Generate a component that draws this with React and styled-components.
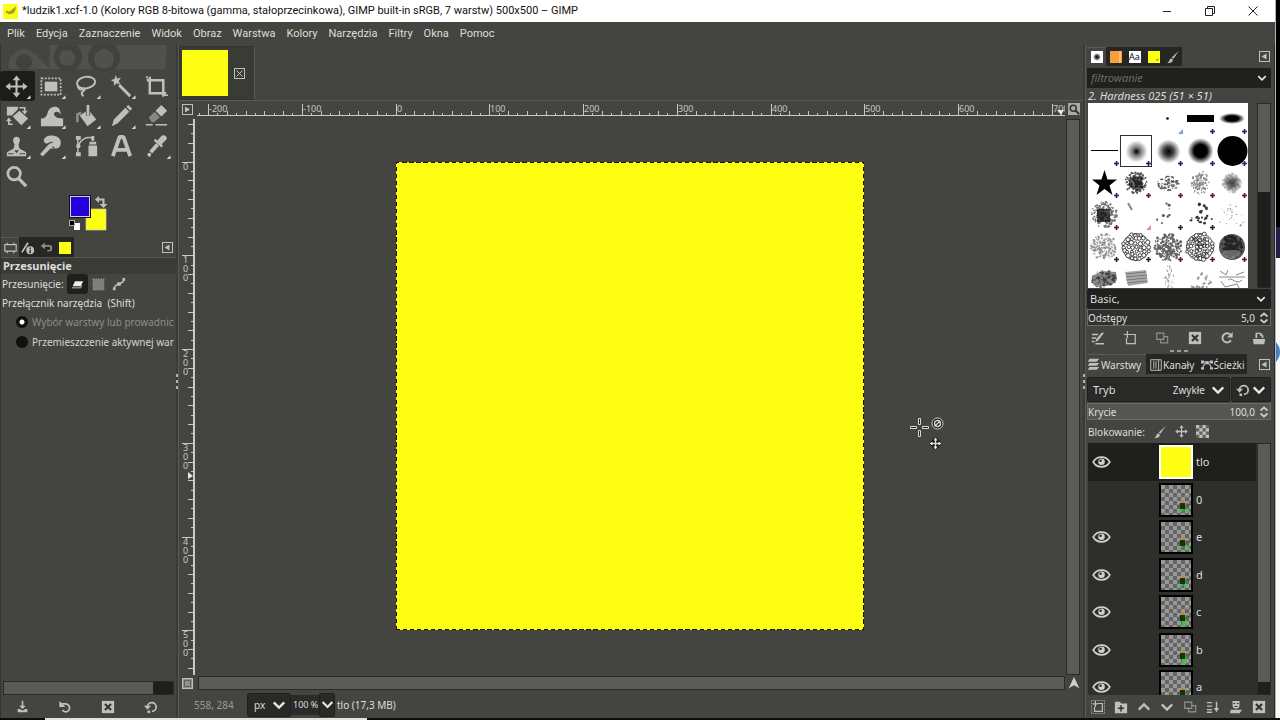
import React from 'react';
import styled, { createGlobalStyle, css } from 'styled-components';

const GlobalStyle = createGlobalStyle`
  * { box-sizing: border-box; }
  html, body { margin: 0; padding: 0; }
  body {
    background: #000;
    color: #dededa;
    font-family: "Noto Sans", "Open Sans", sans-serif;
    font-size: 10px;
    line-height: 16px;
    overflow: hidden;
  }
  button, input, select {
    font: inherit;
    color: inherit;
    background: none;
    border: 0;
    margin: 0;
    padding: 0;
    min-width: 0;
    border-radius: 0;
    outline: 0;
  }
  svg { display: block; flex: none; }
`;

const ICON = '#bfbfbb';

/* ---------- window frame ---------- */

const Desktop = styled.div`
  display: grid;
  grid-template-columns: minmax(0, 1fr) 5px;
  grid-template-rows: minmax(0, 1fr) 2px;
  height: 100vh;
`;

const Window = styled.div`
  display: flex;
  flex-direction: column;
  min-height: 0;
  background: #444441;
`;

const Behind = styled.div`
  display: flex;
  flex-direction: column;
  background: #fafafa;
  border-left: 1px solid #b4b4b0;
  overflow: hidden;
`;

const BehindBlock = styled.div`
  flex: none;
  height: ${p => p.$h}px;
  margin-left: -1px;
  background: ${p => p.$color};
`;

const BlueBadge = styled.div`
  flex: none;
  width: 28px;
  height: 28px;
  margin-top: 80px;
  margin-left: -24px;
  border-radius: 50%;
  background: #4b7fc4;
`;

const Taskbar = styled.div`
  grid-column: 1 / -1;
  display: flex;
  padding-left: 45px;
  background: #0c0c0c;
`;

const TaskbarItem = styled.div`
  width: 322px;
  background: #e4e2dc;
`;

const TitleBar = styled.header`
  display: flex;
  align-items: center;
  height: 22px;
  padding: 0 3px;
  gap: 4px;
  background: #fff;
  color: #111;
`;

const TitleText = styled.h1`
  flex: 1;
  margin: 0;
  font-family: Roboto, "Open Sans", sans-serif;
  font-size: 11px;
  font-weight: 400;
  white-space: nowrap;
`;

const WindowButton = styled.button`
  display: flex;
  justify-content: center;
  width: 39px;
  flex: none;
`;

const MenuBar = styled.nav`
  display: flex;
  align-items: center;
  height: 23px;
  padding: 0 7px;
  gap: 11px;
  font-family: Roboto, "Open Sans", sans-serif;
  font-size: 11px;
`;

const MenuButton = styled.button`
  white-space: nowrap;
`;

const Body = styled.div`
  display: flex;
  flex: 1;
  min-height: 0;
`;

const Splitter = styled.div`
  display: flex;
  flex-direction: column;
  align-items: center;
  justify-content: center;
  gap: 3px;
  width: 3px;
  background: #3a3a37;
  border-right: 1px solid #5a5a57;
`;

const SplitDot = styled.span`
  width: 2px;
  height: 3px;
  background: #b0b0ac;
`;

/* ---------- left dock ---------- */

const LeftDock = styled.aside`
  display: flex;
  flex-direction: column;
  width: 176px;
  flex: none;
  border-left: 1px solid #33332f;
`;

const ToolGrid = styled.div`
  display: grid;
  grid-template-columns: repeat(5, 35px);
  grid-auto-rows: 30px;
  margin-left: -1px;
`;

const ToolButton = styled.button`
  display: flex;
  align-items: center;
  justify-content: center;
  border-radius: 3px;
  background: ${p => (p.$active ? '#1c1c1a' : 'transparent')};
`;

const ColorArea = styled.div`
  height: 46px;
  padding: 4px 0 0 67px;
`;

const TabRow = styled.div`
  display: flex;
  align-items: stretch;
  height: ${p => p.$h || 20}px;
  padding-right: ${p => p.$right || 0}px;
`;

const DockTab = styled.button`
  display: flex;
  align-items: center;
  justify-content: center;
  gap: 1px;
  width: ${p => (p.$wide ? 'auto' : p.$w ? p.$w + 'px' : '19px')};
  white-space: nowrap;
  font-size: 10px;
  background: ${p => (p.$active ? 'transparent' : '#262624')};
  border-top: 1px solid ${p => (p.$active ? '#5a5a57' : '#262624')};
`;

const TabMenu = styled.button`
  margin-left: auto;
`;

const SectionTitle = styled.h2`
  margin: 0;
  height: 17px;
  padding-left: 2px;
  font-size: 11px;
  line-height: 16px;
  font-weight: 700;
  background: #3a3a37;
  border-top: 1px solid #555552;
`;

const OptionRow = styled.div`
  display: flex;
  align-items: center;
  height: ${p => p.$h || 20}px;
  padding-left: 1px;
  gap: ${p => p.$gap || 0}px;
  white-space: nowrap;
  overflow: hidden;
`;

const OptionLabel = styled.span`
  padding-right: 3px;
`;

const Toggle = styled.button`
  display: flex;
  align-items: center;
  justify-content: center;
  width: 21px;
  height: 20px;
  border-radius: 3px;
  background: ${p => (p.$active ? '#1f1f1d' : 'transparent')};
`;

const RadioLabel = styled.label`
  display: flex;
  align-items: center;
  height: 20px;
  padding-left: 15px;
  gap: 4px;
  width: 173px;
  overflow: hidden;
  white-space: nowrap;
  color: ${p => (p.$dim ? '#8e8e8a' : '#d4d4d0')};
`;

const Radio = styled.input`
  appearance: none;
  flex: none;
  width: 12px;
  height: 12px;
  border-radius: 50%;
  background: #0f0f0e;
  &:checked { background: radial-gradient(circle, #fff 2px, #0f0f0e 3px); }
`;

const Spacer = styled.div`
  flex: 1;
`;

const IconRow = styled.div`
  display: flex;
  align-items: center;
  justify-content: ${p => (p.$around ? 'space-around' : 'space-between')};
  flex: none;
  height: 23px;
  padding: ${p => (p.$around ? '0 4px 0 0' : '0 5px 0 4px')};
`;

const IconButton = styled.button`
  display: flex;
  align-items: center;
  justify-content: center;
`;

const Trough = styled.div`
  display: flex;
  flex: none;
  background: #1f1f1d;
  border: 1px solid #2a2a28;
  ${p => p.$vertical
    ? css`flex-direction: column; width: 14px;`
    : css`height: 14px;`}
`;

const OptionScroll = styled(Trough)`
  margin: 0 2px;
`;

const Thumb = styled.div`
  flex: 0 0 ${p => p.$size};
  background: #5a5a57;
`;

/* ---------- image area ---------- */

const ImageArea = styled.main`
  display: flex;
  flex-direction: column;
  flex: 1;
  min-width: 0;
`;

const ImageTabs = styled.div`
  height: 56px;
  padding: 1px 0 0;
  border-bottom: 1px solid #5a5a57;
`;

const ImageTab = styled.div`
  display: flex;
  align-items: center;
  gap: 6px;
  width: 76px;
  height: 54px;
  padding-left: 2px;
  background: #3a3a37;
  border: 1px solid #33332f;
  border-right-color: #5a5a57;
`;

const TabThumb = styled.div`
  width: 46px;
  height: 46px;
  background: #ffff14;
`;

const ViewGrid = styled.div`
  display: grid;
  grid-template-columns: 16px minmax(0, 1fr) 18px;
  grid-template-rows: 16px minmax(0, 1fr) 16px;
  flex: 1;
  min-height: 0;
`;

const Corner = styled.button`
  display: flex;
  align-items: center;
  justify-content: center;
`;

const RulerBox = styled.div`
  overflow: hidden;
  font-size: 9px;
`;

const Canvas = styled.div`
  position: relative;
  display: flex;
  align-items: center;
  justify-content: center;
  min-height: 0;
  overflow: hidden;
`;

const Artboard = styled.div`
  width: 468px;
  height: 468px;
  padding: 1px;
  background: repeating-linear-gradient(45deg, #111 0 3px, #ffff14 3px 5px);
`;

const ArtFill = styled.div`
  height: 100%;
  background: #ffff14;
`;

const Pointer = styled.div`
  position: absolute;
  left: 713px;
  top: 299px;
`;

const ScrollV = styled.div`
  display: flex;
  padding: 2px 0 0 1px;
`;

const ScrollH = styled.div`
  padding: 1px 0 0 3px;
`;

const StatusBar = styled.footer`
  display: flex;
  align-items: center;
  height: 27px;
  padding-left: 15px;
`;

const Coords = styled.span`
  width: 53px;
  color: #9a9a96;
`;

const StatusText = styled.span`
  padding-left: 2px;
`;

/* ---------- fields ---------- */

const SelectBox = styled.div`
  position: relative;
  display: flex;
  align-items: center;
  flex: ${p => (p.$grow ? '1' : 'none')};
  height: ${p => p.$h}px;
  width: ${p => p.$w || 'auto'};
  background: ${p => p.$bg || '#292927'};
  border: 1px solid #1f1f1d;
  border-radius: 2px;
`;

const NativeSelect = styled.select`
  appearance: none;
  width: 100%;
  height: 100%;
  padding: 0 ${p => (p.$right ? 24 : 4)}px 0 ${p => p.$left || 2}px;
  font-size: ${p => (p.$large ? 11 : 10)}px;
  text-align-last: ${p => (p.$right ? 'right' : 'left')};
`;

const Chevron = styled.span`
  position: absolute;
  right: ${p => p.$r || 4}px;
  pointer-events: none;
`;

const SelectLabel = styled.label`
  padding-left: 5px;
  font-size: 11px;
`;

const ZoomField = styled.input`
  width: 28px;
  height: 20px;
  background: #2b2b29;
  font-size: 9px;
  padding-left: 2px;
`;

const ArrowButton = styled.button`
  display: flex;
  align-items: center;
  justify-content: center;
  width: ${p => p.$w}px;
  height: ${p => p.$h}px;
  background: #292927;
  border: 1px solid #1f1f1d;
  border-radius: 2px;
`;

const SpinBox = styled.div`
  display: flex;
  align-items: center;
  height: 17px;
  background: ${p => (p.$full ? '#555552' : '#30302e')};
  border: 1px solid #6a6a66;
`;

const SpinInput = styled.input`
  flex: 1;
  height: 14px;
  padding-right: 3px;
  text-align: right;
`;

/* ---------- right dock ---------- */

const RightDock = styled.aside`
  display: flex;
  flex-direction: column;
  width: 189px;
  flex: none;
  padding: 2px 3px 0 1px;
  border-right: 1px solid #2a2a28;
`;

const FilterRow = styled.div`
  display: flex;
  align-items: center;
  height: 20px;
  margin-top: 2px;
  padding: 0 4px;
  background: #20201e;
`;

const FilterInput = styled.input`
  flex: 1;
  font-size: 11px;
  font-style: italic;
  &::placeholder { color: #6c6c68; opacity: 1; }
`;

const BrushName = styled.p`
  margin: 0;
  height: 15px;
  line-height: 15px;
  padding-left: 1px;
  font-size: 11px;
  font-style: italic;
`;

const BrushArea = styled.div`
  display: flex;
  justify-content: space-between;
  height: 185px;
  margin-bottom: 1px;
  padding-left: 1px;
  overflow: hidden;
  flex: none;
`;

const BrushGrid = styled.div`
  display: grid;
  grid-template-columns: repeat(5, 32px);
  grid-auto-rows: 32px;
  background: #fff;
  overflow: hidden;
`;

const BrushCell = styled.button`
  outline: ${p => (p.$active ? '1px solid #30303c' : 'none')};
  outline-offset: -1px;
`;

const Grip = styled.div`
  display: flex;
  justify-content: center;
  gap: 3px;
  height: 5px;
  padding-top: 1px;
  flex: none;
`;

const GripDot = styled.span`
  width: 4px;
  height: 2px;
  background: #9a9a96;
`;

const ModeRow = styled.div`
  display: flex;
  gap: 1px;
  margin: 3px 0 1px;
`;

const LayerArea = styled.div`
  display: flex;
  flex: 1;
  min-height: 0;
  background: #2e2e2b;
  margin-left: 1px;
`;

const LayerList = styled.ul`
  flex: 1;
  margin: 0;
  padding: 0;
  list-style: none;
  overflow: hidden;
`;

const LayerRow = styled.li`
  display: grid;
  grid-template-columns: 71px 34px 1fr;
  align-items: center;
  height: 38px;
  margin-right: 1px;
  background: ${p => (p.$active ? '#1f1f1d' : 'transparent')};
  &:nth-child(even) { margin-bottom: -1px; }
`;

const EyeCell = styled.button`
  display: flex;
  height: 38px;
  align-items: center;
  padding-left: 4px;
`;

const LayerThumb = styled.div`
  width: 34px;
  height: 34px;
  border: 2px solid ${p => (p.$full ? '#fff' : '#000')};
  background: ${p => (p.$full ? '#ffff14' : 'repeating-conic-gradient(#656565 0 25%, #989898 0 50%) 0 0 / 8px 8px')};
`;

const LayerName = styled.span`
  padding-left: 3px;
  font-size: 11px;
`;

/* ---------- icons ---------- */

const Svg = ({ size = 14, box = 16, children, ...rest }) => (
  <svg width={size} height={size} viewBox={`0 0 ${box} ${box}`} fill="none" stroke={ICON} strokeWidth="1.6" {...rest}>
    {children}
  </svg>
);

const ChevronDown = ({ size = 11, color = '#e8e8e4' }) => (
  <Svg size={size} stroke={color} strokeWidth="2.6"><path d="M2 5l6 6 6-6" /></Svg>
);
const ChevronUp = () => <Svg size={14} strokeWidth="2.6"><path d="M2 11l6-6 6 6" /></Svg>;
const Boxed = () => (
  <Svg size={11} box={11} strokeWidth="1"><rect x=".5" y=".5" width="10" height="10" /><path d="M7.5 2.5v6l-5-3z" fill={ICON} stroke="none" /></Svg>
);
const CrossBox = () => (
  <Svg size={14} stroke="none" fill={ICON}>
    <rect x="1" y="1" width="14" height="14" /><path d="M4.5 4.500l7 7m0-7l-7 7" stroke="#333330" strokeWidth="2.400" />
  </Svg>
);
const Undo = () => (
  <Svg size={14} strokeWidth="2"><path d="M3.500 4.500H9a4.500 4.500 0 1 1-4 7" /><path d="M1.500 1v7h7z" fill={ICON} stroke="none" /></Svg>
);
const Reset = () => (
  <Svg size={14} strokeWidth="2"><path d="M4 7a5 5 0 1 1 5 6" /><path d="M0 6.500h8l-4 4.500z" fill={ICON} stroke="none" /><path d="M4 12h3v3H4z" fill={ICON} stroke="none" /></Svg>
);
const Refresh = () => (
  <Svg size={14} strokeWidth="2.200"><path d="M12.500 10.500a5.200 5.200 0 1 1-.5-6" /><path d="M14.500 1v6.500H8z" fill={ICON} stroke="none" /></Svg>
);
const SaveIcon = () => (
  <Svg size={13} stroke="none" fill={ICON}><path d="M7 1h2v6h3L8 11 4 7h3zM2 11h3l1.500 1.500h3L11 11h3v4H2z" /></Svg>
);
const Duplicate = () => (
  <Svg size={14} strokeWidth="1.300" stroke="#92928e"><path d="M2 2.500h8v7H2zM6.500 9.500v4h8v-7H10" /></Svg>
);
const LayersIcon = () => (
  <Svg size={13} stroke="none" fill={ICON}><path d="M3 1h12l-3 3.500H1zM3 6h12l-3 3.500H1zM3 11h12l-3 3.500H1z" /></Svg>
);
const BrushIcon = () => (
  <Svg size={14} stroke="none" fill={ICON}><path d="M14.500 1L8.500 10 6.500 8.500zM6 9.500l2 1.500c-.5 3-3 4-6.500 4C4 13.500 3.500 10.500 6 9.500z" /></Svg>
);
const MoveIcon = () => (
  <Svg size={13} box={24} strokeWidth="2.400">
    <path d="M12 3v18M3 12h18" />
    <path d="M12 .5l4 5H8zM12 23.500l-4-5h8zM.5 12l5-4v8zM23.500 12l-5 4V8z" fill={ICON} stroke="none" />
  </Svg>
);
const Checker = () => (
  <Svg size={13} box={12} stroke="none" fill={ICON}>
    <rect width="12" height="12" fill="#62625f" />
    <path d="M0 0h3v3H0zM6 0h3v3H6zM3 3h3v3H3zM9 3h3v3H9zM0 6h3v3H0zM6 6h3v3H6zM3 9h3v3H3zM9 9h3v3H9z" />
  </Svg>
);
const Eye = () => (
  <svg width="19" height="14" viewBox="0 0 19 14" fill="none" stroke="#d0d0cc" strokeWidth="1.700">
    <path d="M1.200 7C5 .6 14 .6 17.800 7 14 13.400 5 13.400 1.200 7z" />
    <circle cx="9.500" cy="6.700" r="3.300" fill="#d0d0cc" stroke="none" /><circle cx="8.600" cy="5.800" r="1.300" fill="#2e2e2b" stroke="none" />
  </svg>
);

const corner = <path d="M26.500 22v4h-4z" fill="#d8d8d4" stroke="none" />;

// every tool glyph sits in a 28 x 28 box, its origin moved to centre the 24 unit drawing
const toolShapes = {
  'Przesunięcie': <><path d="M12 4v18M3 13h18" strokeWidth="2.200" /><path d="M12 1.500l4 5H8zM12 24.500l-4-5h8zM.5 13l5-4v8zM23.500 13l-5 4V9z" fill={ICON} stroke="none" />{corner}</>,
  'Zaznaczenie prostokątne': <><rect x="1.500" y="4.500" width="20" height="17" strokeDasharray="2 1.500" strokeWidth="1.800" /><rect x="5" y="8" width="13" height="10" fill={ICON} stroke="none" />{corner}</>,
  'Odręczne zaznaczenie': <><ellipse cx="11.500" cy="9" rx="9.500" ry="6" strokeWidth="2" transform="rotate(-9 11 9)" /><path d="M3 12c0 4 3 5 5 3.500s3 1 .5 2.500-2 3 .5 5" strokeWidth="2" />{corner}</>,
  'Różdżka': <><path d="M9.500 11.500L21 23" strokeWidth="3" /><path d="M6 1l1.500 3.600L11.500 4 9 7.300l1.800 3.600L7 9.600 4 12.300l.2-4L.8 6.200l3.900-1z" fill={ICON} stroke="none" />{corner}</>,
  'Kadrowanie': <><path d="M2 6.500h17v16M5 3v17h17" strokeWidth="2.600" /><path d="M2 2v3M19 20v4M19 22h5" strokeWidth="1.500" /></>,
  'Przekształcenie': <><path d="M2 3h12l-1 3-6 6H2zM8 13l7-6 9 8-7 7z" fill={ICON} stroke="none" /><path d="M15 4h5.500v4M8 21H4v-4" /><path d="M17.500 7h6L20.500 11zM1 18h6L4 14z" fill={ICON} stroke="none" />{corner}</>,
  'Wypaczenie': <><path d="M1 23v-8c5 0 6-3 7-6 1.500-6 9-8 12-4l2 6c-2-3-5-4-7-2-1.500 2 .5 6 9 6v8z" fill={ICON} stroke="none" />{corner}</>,
  'Wypełnienie': <><path d="M5 12l9-6 8 10-9 7z" fill={ICON} stroke="none" /><path d="M13.500 2v10" strokeWidth="4.500" stroke="#444441" /><path d="M13.500 1v11" strokeWidth="2.800" /><path d="M2.500 19V11l4-2" strokeWidth="2.600" stroke="#8e8e8a" />{corner}</>,
  'Ołówek': <><path d="M2 23l2-7L16 4l4 4L8 20zM17 3l2-2 4 4-2 2z" fill={ICON} stroke="none" />{corner}</>,
  'Gumka': <><path d="M11 7l6-6 6 6-6 6z" fill={ICON} stroke="none" /><path d="M4 14l6-6 5.500 5.500-6 5.500H7z" fill="#868682" stroke="none" /><path d="M1 21.500h7M11 21.500h12" strokeWidth="1.500" /></>,
  'Klonowanie': <><path d="M2 23v-4l7-4 1-4c-3-5-1-8 2-8s5 3 2 8l1 4 7 4v4z" fill={ICON} stroke="none" /><path d="M3 20.500h6M15 20.500h6" stroke="#4a4a47" strokeWidth="1.200" /><path d="M9.500 17h5L12 20z" fill="#444441" stroke="none" />{corner}</>,
  'Rozsmarowanie': <><path d="M4 6c2-6 14-6 17 0 2 6-1 10-7 9l-3 0-8 8-3-2 7-8 3-3c-4 0-6 0-6-4z" fill={ICON} stroke="none" /><path d="M8 10l5-1.500M15 15l-2-2" stroke="#4a4a47" strokeWidth="1.200" />{corner}</>,
  'Ścieżki': <><path d="M3 4v18M3 13C7 4 12 3 18 4" strokeWidth="1.500" /><path d="M1 2h5v4H1zM1 19h5v4H1zM14 12h9v11h-9zM15 8h7v3h-7zM17 2h3v5h-3z" fill={ICON} stroke="none" /><circle cx="3.500" cy="12.500" r="2.300" fill={ICON} stroke="none" /></>,
  'Tekst': <path d="M3 23L10 3h4l7 20M6 16.500h12" strokeWidth="4" strokeLinejoin="bevel" />,
  'Pobranie koloru': <><path d="M12 8l5-6c3-2 7 1 5 4l-6 6z" fill={ICON} stroke="none" /><path d="M10 6l8 7" strokeWidth="2.500" /><path d="M13 11L6 19" strokeWidth="4" /><circle cx="4.500" cy="21.500" r="2" fill={ICON} stroke="none" />{corner}</>,
  'Powiększenie': <><circle cx="9.500" cy="10" r="6.500" strokeWidth="2.800" /><path d="M14 15l8 8" strokeWidth="3.400" /></>,
};

const WilberBand = () => (
  <svg width="175" height="26" viewBox="0 0 175 26">
    <path d="M8 24C6 14 12 5 23 4c8 0 14 8 26 20z" fill="#50504d" />
    <circle cx="23" cy="17" r="8" fill="#41413e" />
    <path d="M49 0h117l-2 24H48z" fill="#50504d" />
    <circle cx="67" cy="12" r="14" fill="#41413e" /><circle cx="66" cy="13" r="8" fill="#50504d" />
    <circle cx="103" cy="12" r="16" fill="#41413e" /><circle cx="103" cy="14" r="10" fill="#50504d" />
  </svg>
);

const Swatches = () => (
  <svg width="40" height="38" viewBox="0 0 40 38">
    <rect x="17" y="13" width="22" height="23" fill="#111" /><rect x="18" y="14" width="20" height="21" fill="#ffff14" stroke="#d9d9a0" />
    <rect x="1" y="0" width="22" height="23" fill="#111" /><rect x="2.500" y="1.500" width="19" height="20" fill="#2300dc" stroke="#d0d0e0" />
    <path d="M30 4.500h5.500V9" fill="none" stroke={ICON} strokeWidth="2" /><path d="M31 1v7l-4-3.500zM31.500 9h8l-4 4z" fill={ICON} />
    <rect x="6" y="28" width="6" height="7" fill="#fff" /><rect x="1.500" y="25.500" width="5" height="5" fill="#000" stroke="#aaa" />
  </svg>
);

/* ---------- rulers ---------- */

const STEP = 0.9375; // screen pixels per image pixel

function tickList(from, to) {
  const ticks = [];
  for (let v = from; v <= to; v += 10) {
    ticks.push(v);
  }
  return ticks;
}

const RulerX = () => (
  <svg width="100%" height="16">
    {tickList(-210, 710).map(v => {
      const x = Math.floor(201 + v * STEP);
      const major = v % 100 === 0;
      const top = major ? 3 : v % 20 === 0 ? 10 : 12;
      return (
        <g key={v}>
          <rect x={x} y={top} width="1" height={15 - top} fill="#c8c8c4" />
          {major && <text x={x + 1} y="11" fill="#c8c8c4">{v}</text>}
        </g>
      );
    })}
    <rect x="2" y="14" width="100%" height="1" fill="#c8c8c4" />
    <path d="M862 9h7l-3 5z" fill="#e8e8e4" />
  </svg>
);

const RulerY = () => (
  <svg width="16" height="100%">
    {tickList(-40, 540).map(v => {
      const y = Math.floor(45 + v * STEP);
      const major = v % 100 === 0;
      const left = major ? 3 : v % 20 === 0 ? 9 : 12;
      return (
        <g key={v}>
          <rect x={left} y={y} width={15 - left} height="1" fill="#c8c8c4" />
          {major && String(v).split('').map((d, i) => (
            <text key={i} x="4" y={y + 8 + i * 9} fill="#c8c8c4">{d}</text>
          ))}
        </g>
      );
    })}
    <rect x="14" y="2" width="2" height="100%" fill="#c8c8c4" />
    <path d="M9 355v7l5-3z" fill="#e8e8e4" />
  </svg>
);

/* ---------- brushes ---------- */

function randomFrom(seed) {
  let s = seed * 7919 + 13;
  return () => {
    s = (s * 16807) % 2147483647;
    return s / 2147483647;
  };
}

const Speckle = ({ seed, n, r, dot, shade = '#111', opacity = 0.6 }) => {
  const rand = randomFrom(seed);
  const dots = [];
  for (let i = 0; i < n; i++) {
    const a = rand() * Math.PI * 2;
    const d = Math.pow(rand(), 0.7) * r;
    dots.push(<circle key={i} cx={16 + Math.cos(a) * d} cy={16 + Math.sin(a) * d} r={dot * (0.5 + rand())} />);
  }
  return <g fill={shade} opacity={opacity}>{dots}</g>;
};

const Cells = ({ seed }) => {
  const rand = randomFrom(seed);
  const cells = [];
  for (let y = 4; y < 30; y += 4) {
    for (let x = 4; x < 30; x += 4) {
      if (Math.hypot(x - 16, y - 16) < 13) {
        cells.push(<circle key={x + '-' + y} cx={x + rand() * 2 - 1} cy={y + rand() * 2 - 1} r={1.4 + rand() * 0.8} />);
      }
    }
  }
  return <g fill="#fff" stroke="#333" strokeWidth="0.9"><circle cx="16" cy="16" r="13.500" />{cells}</g>;
};

const Strokes = ({ seed, n, w = 1.5, color = '#888' }) => {
  const rand = randomFrom(seed);
  let d = '';
  for (let i = 0; i < n; i++) {
    d += `M${4 + rand() * 22} ${6 + rand() * 20}l${rand() * 8 - 4} ${rand() * 6 - 3}`;
  }
  return <path d={d} stroke={color} strokeWidth={w} fill="none" />;
};

const brushes = [
  { name: 'Puste', art: null },
  { name: 'Puste 2', art: null },
  { name: 'Pixel', art: <circle cx="15.500" cy="15.500" r="1.300" />, mark: 'blue' },
  { name: 'Block', art: <rect x="3" y="12" width="27" height="7" />, plus: '#20205a' },
  { name: 'Ellipse', art: <ellipse cx="16" cy="15.500" rx="13" ry="5.500" fill="url(#soft3)" />, plus: '#20205a' },
  { name: 'Line', art: <rect x="3" y="15" width="27" height="1" />, plus: '#20205a' },
  { name: 'Hardness 025', art: <circle cx="16.500" cy="16.500" r="11" fill="url(#soft1)" />, plus: '#20205a', active: true },
  { name: 'Hardness 050', art: <circle cx="16.500" cy="16.500" r="12" fill="url(#soft2)" />, plus: '#20205a' },
  { name: 'Hardness 075', art: <circle cx="16.500" cy="16" r="13" fill="url(#soft3)" />, plus: '#20205a' },
  { name: 'Hardness 100', art: <circle cx="16.500" cy="16" r="15" />, plus: '#20205a' },
  { name: 'Star', art: <path d="M16.500 3l3 9.500H29l-7.500 6 3 9.500-8-6-8 6 3-9.500L4 12.500h9.500z" />, plus: '#20205a' },
  { name: 'Acrylic 01', art: <><Speckle seed={3} n={150} r={11} dot={0.8} opacity={0.7} /><path d="M9 12l6-3 8 1-1 6 2 5-7 3-5-3-3-3z" opacity=".6" /></>, plus: '#5a1520' },
  { name: 'Acrylic 02', art: <g transform="translate(0 5) scale(1 .7)"><Speckle seed={5} n={120} r={11} dot={0.8} opacity={0.7} /></g>, plus: '#5a1520' },
  { name: 'Acrylic 03', art: <g transform="translate(4 0) scale(.75 1)"><Speckle seed={8} n={130} r={12} dot={0.8} opacity={0.5} /></g>, plus: '#5a1520' },
  { name: 'Acrylic 04', art: <><circle cx="16" cy="16" r="10" fill="url(#soft2)" opacity=".7" /><Speckle seed={9} n={100} r={10} dot={0.8} opacity={0.25} /></>, plus: '#5a1520' },
  { name: 'Acrylic 05', art: <><Speckle seed={13} n={200} r={13} dot={0.8} opacity={0.6} /><rect x="9" y="10" width="13" height="13" opacity=".7" /></>, plus: '#5a1520' },
  { name: 'Bristles', art: <path d="M8 4l4 7" stroke="#888" strokeWidth="2" />, mark: 'red' },
  { name: 'Sparks', art: <Speckle seed={16} n={9} r={13} dot={1.1} opacity={0.7} />, plus: '#222' },
  { name: 'Splatter', art: <Speckle seed={18} n={26} r={13} dot={1.2} opacity={0.85} />, plus: '#222' },
  { name: 'Dust', art: <Speckle seed={24} n={28} r={15} dot={0.6} opacity={0.5} /> },
  { name: 'Chalk', art: <Speckle seed={29} n={190} r={13} dot={0.8} opacity={0.45} />, plus: '#222' },
  { name: 'Cells 1', art: <Cells seed={4} />, plus: '#222' },
  { name: 'Texture 1', art: <Speckle seed={33} n={240} r={14} dot={0.9} opacity={0.65} />, plus: '#5a1520' },
  { name: 'Cells 2', art: <><Cells seed={11} /><Speckle seed={7} n={70} r={12} dot={0.8} opacity={0.5} /></>, plus: '#5a1520' },
  { name: 'Texture 2', art: <><circle cx="16" cy="16" r="13" fill="#555" /><Speckle seed={36} n={90} r={12} dot={1.4} opacity={0.7} /><path d="M6 22c3-3 9-4 19-2-2 8-14 12-19 2z" fill="#aaa" opacity=".5" /></>, plus: '#5a1520' },
  { name: 'Charcoal', art: <><path d="M4 13l10-5 14 1 1 8-5 5-16 2-4-4z" fill="#888" /><g transform="translate(0 4) scale(1 .75)"><Speckle seed={40} n={80} r={13} dot={1} /></g></> },
  { name: 'Hatch', art: <><path d="M5 9l21-2 2 13-20 3z" fill="#aaa" /><path d="M6 11l20-2M6 14l21-2M6 17l21-2M7 20l20-2" stroke="#777" /></> },
  { name: 'Sand', art: <g transform="translate(11 0) scale(.35 1)"><Speckle seed={44} n={40} r={14} dot={0.9} opacity={0.5} /></g> },
  { name: 'Grass', art: <Strokes seed={5} n={14} w={2} color="#999" /> },
  { name: 'Vine', art: <path d="M3 14h26M4 8l6 4 2-5M20 12l8-3M5 18l4 6 12-3 3 6M12 17c4-4 8 6 14 0" stroke="#888" fill="none" /> },
];

const Brush = ({ brush }) => (
  <svg width="32" height="32" viewBox="0 0 32 32">
    {brush.art}
    {brush.plus && <path d="M26 28.500h5M28.500 26v5" stroke={brush.plus} strokeWidth="1.600" />}
    {brush.mark && <path d="M31 26v5h-5z" fill={brush.mark === 'blue' ? '#7d9be0' : '#e88a94'} />}
  </svg>
);

const BrushDefs = () => (
  <svg width="0" height="0">
    <defs>
      <radialGradient id="soft1"><stop offset="0" stopColor="#000" /><stop offset=".4" stopColor="#000" stopOpacity=".5" /><stop offset="1" stopColor="#000" stopOpacity="0" /></radialGradient>
      <radialGradient id="soft2"><stop offset="0" stopColor="#000" /><stop offset=".4" stopColor="#000" stopOpacity=".75" /><stop offset="1" stopColor="#000" stopOpacity="0" /></radialGradient>
      <radialGradient id="soft3"><stop offset=".5" stopColor="#000" /><stop offset="1" stopColor="#000" stopOpacity="0" /></radialGradient>
    </defs>
  </svg>
);

/* ---------- layers ---------- */

const layers = [
  { name: 'tlo', visible: true, full: true },
  { name: '0', visible: false, legs: 'M22 24l-4 4M25 24l4 4' },
  { name: 'e', visible: true, legs: 'M22 23l-5 4M25 23l4 5' },
  { name: 'd', visible: true, legs: 'M22 23l-4 5M24 23v5' },
  { name: 'c', visible: true, legs: 'M22 22v7M24 22v7' },
  { name: 'b', visible: true, legs: 'M22 22v7M24 22v7' },
  { name: 'a', visible: true, legs: 'M22 22l-3 6M24 22l3 6' },
];

const Figure = ({ legs }) => (
  <svg width="30" height="30" viewBox="0 0 30 30">
    <path d={legs} stroke="#35c935" strokeWidth="2" />
    <path d="M17 21l4-2M25 19l4 1" stroke="#2f6b35" strokeWidth="1.500" />
    <rect x="19" y="18" width="5" height="6" fill="#123312" /><rect x="20" y="15" width="4" height="3" fill="#c9862c" />
  </svg>
);

const menus = ['Plik', 'Edycja', 'Zaznaczenie', 'Widok', 'Obraz', 'Warstwa', 'Kolory', 'Narzędzia', 'Filtry', 'Okna', 'Pomoc'];

function LeftPanel() {
  return (
    <LeftDock>
      <WilberBand />
      <ToolGrid>
        {Object.keys(toolShapes).map((name, i) => (
          <ToolButton key={name} $active={i === 0} aria-label={name}>
            <Svg size={27} viewBox="-1 -1 28 28">{toolShapes[name]}</Svg>
          </ToolButton>
        ))}
      </ToolGrid>
      <ColorArea><Swatches /></ColorArea>
      <TabRow $right={3}>
        <DockTab $w={18} $active aria-label="Opcje narzędzia"><Svg size={13} strokeWidth="1.400"><path d="M1 4.500h14v8H1zM4 12.500V15M12 12.500V15M4 2v2M12 2v2" /></Svg></DockTab>
        <DockTab $w={18} aria-label="Stan urządzenia"><Svg size={14}><path d="M1 13L8 2" strokeWidth="2" /><circle cx="10.500" cy="10.500" r="4.500" fill={ICON} stroke="none" /><path d="M10.500 7.500v1.500M10.500 10v4" stroke="#222" /></Svg></DockTab>
        <DockTab $w={18} aria-label="Historia"><Svg size={13} stroke="#8e8e8a" strokeWidth="2"><path d="M3 6h8c4 0 4 6 0 6H9" /><path d="M6 2L1 6l5 4z" fill="#8e8e8a" stroke="none" /></Svg></DockTab>
        <DockTab $w={19} aria-label="Obrazy"><Svg size={14} box={14} stroke="none"><rect x="1" y="1" width="12" height="12" fill="#ffff14" /></Svg></DockTab>
        <TabMenu aria-label="Menu karty"><Boxed /></TabMenu>
      </TabRow>
      <SectionTitle>Przesunięcie</SectionTitle>
      <OptionRow $h={20}>
        <OptionLabel>Przesunięcie:</OptionLabel>
        <Toggle $active aria-label="Warstwa"><Svg size={13} stroke="none"><path d="M5 4h10l-3 6H2z" fill="#eee" /><path d="M1 11h10l2-3 1 2-2 3H1z" fill="#888" /></Svg></Toggle>
        <Toggle aria-label="Zaznaczenie"><Svg size={13}><rect x="1.500" y="1.500" width="13" height="13" fill="#7d7d79" stroke="#9a9a96" strokeDasharray="1.500 1.500" /></Svg></Toggle>
        <Toggle aria-label="Ścieżka"><Svg size={14} strokeWidth="1.500"><path d="M2 14C3 9 6 9 8 8s5-1 6-6" /><path d="M6 6h4v4H6zM1 12h3v3H1zM12 1h3v3h-3z" fill={ICON} stroke="none" /></Svg></Toggle>
      </OptionRow>
      <OptionRow $h={18}>Przełącznik narzędzia&nbsp; (Shift)</OptionRow>
      <RadioLabel $dim><Radio type="radio" name="toggle" defaultChecked />Wybór warstwy lub prowadnicy</RadioLabel>
      <RadioLabel><Radio type="radio" name="toggle" />Przemieszczenie aktywnej warstwy</RadioLabel>
      <Spacer />
      <OptionScroll><Thumb $size="88%" /></OptionScroll>
      <IconRow $around>
        <IconButton aria-label="Zapisz"><SaveIcon /></IconButton>
        <IconButton aria-label="Przywróć"><Undo /></IconButton>
        <IconButton aria-label="Usuń"><CrossBox /></IconButton>
        <IconButton aria-label="Domyślne"><Reset /></IconButton>
      </IconRow>
    </LeftDock>
  );
}

function ImageView() {
  return (
    <ImageArea>
      <ImageTabs>
        <ImageTab>
          <TabThumb />
          <IconButton aria-label="Zamknij obraz"><Svg size={11} box={11} strokeWidth="1"><rect x=".5" y=".5" width="10" height="10" /><path d="M2.500 2.500l6 6m0-6l-6 6" /></Svg></IconButton>
        </ImageTab>
      </ImageTabs>
      <ViewGrid>
        <Corner aria-label="Menu obrazu"><Svg size={11} box={11} strokeWidth="1"><rect x=".5" y=".5" width="10" height="10" /><path d="M3 2.500v6l5-3z" fill={ICON} stroke="none" /></Svg></Corner>
        <RulerBox><RulerX /></RulerBox>
        <Corner aria-label="Powiększ"><Svg size={12}><rect width="16" height="16" fill="#aaaaa6" stroke="none" /><circle cx="7" cy="7" r="4" stroke="#333330" strokeWidth="2" /><path d="M10 10l5 5" stroke="#333330" strokeWidth="2.500" /></Svg></Corner>
        <RulerBox><RulerY /></RulerBox>
        <Canvas>
          <Artboard><ArtFill /></Artboard>
          <Pointer>
            <svg width="36" height="36" viewBox="0 0 36 36" fill="none" stroke="#d8d8d4">
              <path d="M10.500 2.500h2v6h-2zM10.500 14.500h2v6h-2zM2.500 10.500h6v2h-6zM14.500 10.500h6v2h-6z" fill="#222" />
              <circle cx="29.500" cy="7.500" r="5.500" fill="#111" /><circle cx="29.500" cy="7.500" r="3" strokeWidth="1.500" /><path d="M27 10l5-5" strokeWidth="1.500" />
              <path d="M27.500 21l6.500 6.500-6.500 6.500-6.500-6.500z" fill="#111" stroke="none" /><path d="M27.500 23v9M23 27.500h9" strokeWidth="1.400" />
              <path d="M27.500 21.500l2 3h-4zM27.500 33.500l-2-3h4zM21.500 27.500l3-2v4zM33.500 27.500l-3 2v-4z" fill="#eee" stroke="none" />
            </svg>
          </Pointer>
        </Canvas>
        <ScrollV><Trough $vertical><Thumb $size="100%" /></Trough></ScrollV>
        <Corner aria-label="Szybka maska"><Svg size={11} box={11} strokeWidth="1"><rect x=".5" y=".5" width="10" height="10" fill="#8e8e8a" /><rect x="2.500" y="2.500" width="6" height="6" stroke="#62625f" /></Svg></Corner>
        <ScrollH><Trough><Thumb $size="100%" /></Trough></ScrollH>
        <Corner aria-label="Nawigacja"><Svg size={12} stroke="none" fill="#d0d0cc"><path d="M8 0l7 15-7-4-7 4z" /></Svg></Corner>
      </ViewGrid>
      <StatusBar>
        <Coords>558, 284</Coords>
        <SelectBox $h={24} $w="44px">
          <NativeSelect $left={6} aria-label="Jednostka"><option>px</option></NativeSelect>
          <Chevron><ChevronDown size={14} /></Chevron>
        </SelectBox>
        <ZoomField aria-label="Powiększenie" defaultValue="100 %" />
        <ArrowButton $w={16} $h={24} aria-label="Lista powiększeń"><ChevronDown size={13} /></ArrowButton>
        <StatusText>tlo (17,3 MB)</StatusText>
      </StatusBar>
    </ImageArea>
  );
}

const SpinArrows = () => (
  <Svg size={12} box={12} strokeWidth="1.800" stroke="#c8c8c4"><path d="M2.500 4.500L6 1.500l3.500 3M2.500 7.500l3.500 3 3.500-3" /></Svg>
);

function RightPanel() {
  return (
    <RightDock>
      <TabRow $right={1} $h={19}>
        <DockTab $active aria-label="Pędzle"><Svg size={14} box={14} stroke="none"><rect x="1" y="1" width="12" height="12" fill="#fff" /><circle cx="7" cy="7" r="4" fill="url(#soft2)" /></Svg></DockTab>
        <DockTab aria-label="Desenie"><Svg size={14} box={14} stroke="none"><rect x="1" y="1" width="12" height="12" fill="#f5a03c" /><path d="M10 1h2v12h-2z" fill="#ffc070" /></Svg></DockTab>
        <DockTab aria-label="Czcionki"><svg width="14" height="14"><rect x="1" y="1" width="12" height="12" fill="#fff" /><text x="1" y="10" fontSize="9" fill="#111">Aa</text></svg></DockTab>
        <DockTab aria-label="Historia dokumentu"><Svg size={14} box={14} stroke="none"><rect x="1" y="1" width="12" height="12" fill="#ffff14" /><path d="M7 8l2 2 3-2-2 3z" fill="#665" /></Svg></DockTab>
        <DockTab aria-label="Edytor pędzli"><BrushIcon /></DockTab>
        <TabMenu aria-label="Menu karty"><Boxed /></TabMenu>
      </TabRow>
      <FilterRow>
        <FilterInput placeholder="filtrowanie" aria-label="Filtrowanie" />
        <IconButton aria-label="Lista etykiet"><ChevronDown size={10} /></IconButton>
      </FilterRow>
      <BrushName>2. Hardness 025 (51 × 51)</BrushName>
      <BrushArea>
        <BrushGrid>
          {brushes.map(b => <BrushCell key={b.name} $active={b.active} aria-label={b.name}><Brush brush={b} /></BrushCell>)}
        </BrushGrid>
        <Trough $vertical><Thumb $size="48%" /></Trough>
      </BrushArea>
      <SelectBox $h={20} $bg="#20201e">
        <NativeSelect $large aria-label="Etykiety"><option>Basic,</option></NativeSelect>
        <Chevron><ChevronDown size={10} /></Chevron>
      </SelectBox>
      <SpinBox>
        <label htmlFor="spacing">Odstępy</label>
        <SpinInput id="spacing" defaultValue="5,0" />
        <SpinArrows />
      </SpinBox>
      <IconRow>
        <IconButton aria-label="Edytuj"><Svg size={14}><path d="M1 4h7M1 8h5M1 12h3M5 14.500h10" /><path d="M15 2L8 11l-3 1.500 1-3L12 2z" fill={ICON} stroke="none" /></Svg></IconButton>
        <IconButton aria-label="Nowy"><Svg size={14} strokeWidth="1.400"><path d="M7 4h7v10.500H4V8M5 0v8M1 4h8" /></Svg></IconButton>
        <IconButton aria-label="Duplikuj"><Duplicate /></IconButton>
        <IconButton aria-label="Usuń"><CrossBox /></IconButton>
        <IconButton aria-label="Odśwież"><Refresh /></IconButton>
        <IconButton aria-label="Otwórz"><Svg size={14} stroke="none" fill={ICON}><path d="M1 9h14l-1 6H2zM4 8V2h6l3 3v3h-2V5.500H9V3.500H6V8z" /></Svg></IconButton>
      </IconRow>
      <Grip><GripDot /><GripDot /><GripDot /></Grip>
      <TabRow $right={1}>
        <DockTab $wide $active><LayersIcon />Warstwy&nbsp;&nbsp;</DockTab>
        <DockTab $wide>&nbsp;<Svg size={12} strokeWidth="1.300"><path d="M1 1h14v14H1zM5 3v10M8 3v10M11.500 1v14" /></Svg>Kanały&nbsp;</DockTab>
        <DockTab $wide>&nbsp;<Svg size={12}><path d="M1 4h14M2 13c1-5 4-8 6-8s5 3 6 8" strokeWidth="1.500" /><path d="M0 2h4v4H0zM6 3h4v4H6zM12 2h4v4h-4zM0 11h4v3H0zM12 11h4v3h-4z" fill={ICON} stroke="none" /></Svg>Ścieżki&nbsp;</DockTab>
        <TabMenu aria-label="Menu karty"><Boxed /></TabMenu>
      </TabRow>
      <ModeRow>
        <SelectBox $h={25} $grow>
          <SelectLabel htmlFor="mode">Tryb</SelectLabel>
          <NativeSelect id="mode" $right><option>Zwykłe</option></NativeSelect>
          <Chevron><ChevronDown size={14} /></Chevron>
        </SelectBox>
        <ArrowButton $w={40} $h={25} aria-label="Grupa trybów"><Reset />&nbsp;<ChevronDown size={14} /></ArrowButton>
      </ModeRow>
      <SpinBox $full>
        <label htmlFor="opacity">Krycie</label>
        <SpinInput id="opacity" defaultValue="100,0" />
        <SpinArrows />
      </SpinBox>
      <OptionRow $h={23} $gap={8}>
        <span>Blokowanie:</span>
        <IconButton aria-label="Zablokuj piksele"><BrushIcon /></IconButton>
        <IconButton aria-label="Zablokuj położenie"><MoveIcon /></IconButton>
        <IconButton aria-label="Zablokuj alfę"><Checker /></IconButton>
      </OptionRow>
      <LayerArea>
        <LayerList>
          {layers.map(l => (
            <LayerRow key={l.name} $active={l.full}>
              <EyeCell aria-label={'Widoczność ' + l.name}>{l.visible && <Eye />}</EyeCell>
              <LayerThumb $full={l.full}>{!l.full && <Figure legs={l.legs} />}</LayerThumb>
              <LayerName>{l.name}</LayerName>
            </LayerRow>
          ))}
        </LayerList>
        <Trough $vertical><Thumb $size="95%" /></Trough>
      </LayerArea>
      <IconRow>
        <IconButton aria-label="Nowa warstwa"><Svg size={14} strokeWidth="1.400"><rect x=".5" y=".5" width="15" height="15" strokeDasharray="1 1" strokeWidth="1" /><path d="M8 4h5v9H4V8M5 1v7M2 4.500h6" /></Svg></IconButton>
        <IconButton aria-label="Nowa grupa"><Svg size={14} stroke="none" fill={ICON}><path d="M1 2h6l1 2h7v11H1z" /><path d="M8 6v7M4.500 9.500h7" stroke="#333330" strokeWidth="1.800" /></Svg></IconButton>
        <IconButton aria-label="W górę"><ChevronUp /></IconButton>
        <IconButton aria-label="W dół"><ChevronDown size={14} color={ICON} /></IconButton>
        <IconButton aria-label="Duplikuj warstwę"><Duplicate /></IconButton>
        <IconButton aria-label="Połącz"><Svg size={14}><path d="M1 3h6M1 7h6M1 11h6M1 14h6M12 2v8" /><path d="M9 9h6l-3 5z" fill={ICON} stroke="none" /></Svg></IconButton>
        <IconButton aria-label="Maska"><Svg size={14} stroke="none" fill={ICON}><path d="M4 1h8v5c0 3-2 4-4 4S4 9 4 6zM2 11h13l-3 4H1z" /><path d="M5 4h2M9 4h2M6.500 7.500h3" stroke="#333330" strokeWidth="1.200" /></Svg></IconButton>
        <IconButton aria-label="Usuń warstwę"><CrossBox /></IconButton>
      </IconRow>
    </RightDock>
  );
}

export default function App() {
  return (
    <>
      <GlobalStyle />
      <Desktop>
        <Window>
          <TitleBar>
            <Svg size={15} stroke="none"><rect width="16" height="16" fill="#ffff14" /><path d="M3 7l4 1 5-4 2-2-1 5-2 3-5 1-3-2z" fill="#a5a02c" /></Svg>
            <TitleText>*ludzik1.xcf-1.0 (Kolory RGB 8-bitowa (gamma, stałoprzecinkowa), GIMP built-in sRGB, 7 warstw) 500x500 – GIMP</TitleText>
            <WindowButton aria-label="Minimalizuj"><Svg size={10} box={10} stroke="#222" strokeWidth="1"><path d="M1 5.500h8" /></Svg></WindowButton>
            <WindowButton aria-label="Przywróć"><Svg size={10} box={10} stroke="#222" strokeWidth="1"><path d="M.5 2.500h7v7h-7zM2.500 2.500v-2h7v7h-2" /></Svg></WindowButton>
            <WindowButton aria-label="Zamknij"><Svg size={10} box={10} stroke="#222" strokeWidth="1"><path d="M.5 .5l9 9m0-9l-9 9" /></Svg></WindowButton>
          </TitleBar>
          <MenuBar>
            {menus.map(m => <MenuButton key={m}>{m}</MenuButton>)}
          </MenuBar>
          <Body>
            <LeftPanel />
            <Splitter><SplitDot /><SplitDot /><SplitDot /></Splitter>
            <ImageView />
            <Splitter><SplitDot /><SplitDot /><SplitDot /></Splitter>
            <RightPanel />
          </Body>
        </Window>
        <Behind>
          <BehindBlock $h={227} $color="#000" />
          <BehindBlock $h={31} $color="#241d48" />
          <BlueBadge />
        </Behind>
        <Taskbar><TaskbarItem /></Taskbar>
      </Desktop>
      <BrushDefs />
    </>
  );
}
